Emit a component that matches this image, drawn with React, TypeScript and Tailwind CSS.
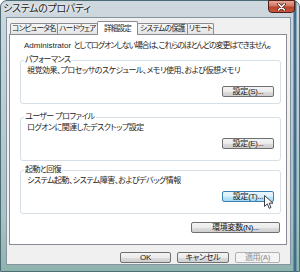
import React from 'react';

const btnBase =
  'h-[11px] flex items-center justify-center rounded-[2px] border text-[8px] leading-none whitespace-nowrap tracking-[-0.3px]';
const btnNormal =
  'border-[#707070] text-[#1a1a1a] bg-[linear-gradient(#f3f3f3_0%,#ebebeb_50%,#dddddd_51%,#cfcfcf_100%)]';
const btnHover =
  'border-[#3c7fb1] text-[#1a1a1a] bg-[linear-gradient(#eaf6fd_0%,#d9f0fc_50%,#bee6fd_51%,#a7d9f5_100%)]';
const btnDisabled = 'border-[#adb2b5] text-[#8d8d8d] bg-[#f4f4f4]';

const tabs = [
  { name: 'コンピュータ名', w: 'w-[48px]' },
  { name: 'ハードウェア', w: 'w-[41px] -ml-[1px]' },
  { name: '詳細設定', w: 'w-[41px] -ml-[1px]', active: true },
  { name: 'システムの保護', w: 'w-[51px] -ml-[1px]' },
  { name: 'リモート', w: 'w-[27px] -ml-[1px]' },
];

type GroupProps = {
  label: string;
  text: string;
  button: string;
  className: string;
  btnGap: string;
  hover?: boolean;
};

function Group({ label, text, button, className, btnGap, hover }: GroupProps) {
  return (
    <div
      className={`relative h-[44px] border border-[#d5dfe5] rounded-[3px] pt-[5px] pl-[6px] pr-[6px] flex flex-col ${className}`}
    >
      {/* legend sits over the top border */}
      <span className="absolute -top-[6px] left-[3px] bg-white px-[1px] text-[8px] leading-[10px] tracking-[-0.6px] whitespace-nowrap">
        {label}
      </span>
      <p className="text-[8px] leading-[10px] tracking-[-0.5px] whitespace-nowrap">{text}</p>
      <div className={`flex justify-end ${btnGap}`}>
        <div className={`relative w-[52px] ${btnBase} ${hover ? btnHover : btnNormal}`}>
          {button}
          {hover && (
            <svg
              className="absolute left-[41px] top-[3px] z-10"
              width="10"
              height="15"
              viewBox="0 0 10 15"
            >
              <path
                d="M0.5 0.5 L0.5 11.5 L3.3 8.9 L5.2 13.3 L7 12.5 L5.2 8.2 L9 8.2 Z"
                fill="#ffffff"
                stroke="#3a3f45"
                strokeWidth="1"
                strokeLinejoin="round"
              />
            </svg>
          )}
        </div>
      </div>
    </div>
  );
}

export default function App() {
  return (
    <div className="w-[300px] h-[272px] bg-white font-['Liberation_Sans','Noto_Sans_CJK_JP',sans-serif] [font-feature-settings:'palt'] text-[#1e1e1e] select-none">
      <div className="flex flex-col h-full rounded-t-[7px] border border-[#4a6c74] pl-[5px] pr-[8px] pb-[6px] bg-[linear-gradient(90deg,transparent_0%,transparent_98%,#3f6f8e_98.3%,#3f6f8e_99%,transparent_99.3%),linear-gradient(#cfd8de_0%,#bccbd2_40%,#a9c2c3_80%,#8fb3ad_100%)]">
        {/* Title bar */}
        <div className="h-[16px] flex items-start">
          <span className="-ml-[3px] mt-[1px] text-[10px] leading-[14px] tracking-[-0.3px] text-[#1a1a1a] whitespace-nowrap [text-shadow:0_0_4px_#ffffff,0_0_2px_#ffffff]">
            システムのプロパティ
          </span>
          <div className="ml-auto -mr-[4px] -mt-[1px] w-[27px] h-[13px] rounded-b-[4px] border border-[#4e2019] bg-[linear-gradient(#e9a99a_0%,#d07560_45%,#b8432d_55%,#c9573c_100%)] flex items-center justify-center">
            <svg width="9" height="8" viewBox="0 0 9 8">
              <path d="M1.5 1 L7.5 7 M7.5 1 L1.5 7" stroke="#4a1c14" strokeWidth="3" strokeLinecap="round" />
              <path d="M1.5 1 L7.5 7 M7.5 1 L1.5 7" stroke="#ffffff" strokeWidth="1.6" strokeLinecap="round" />
            </svg>
          </div>
        </div>

        {/* Client area */}
        <div className="flex-1 flex flex-col bg-[#f0f0f0] border border-[#8595a0] px-[2px] pt-[3px]">
          {/* Tabs */}
          <div className="flex items-end h-[13px] pl-[1px]">
            {tabs.map((t) =>
              t.active ? (
                <div
                  key={t.name}
                  className={`${t.w} relative z-10 h-[14px] -mb-[1px] border border-b-0 border-[#898c95] bg-white rounded-t-[2px] flex items-center justify-center text-[7.5px] leading-none tracking-[-0.7px] whitespace-nowrap`}
                >
                  {t.name}
                </div>
              ) : (
                <div
                  key={t.name}
                  className={`${t.w} h-[11px] border border-b-0 border-[#898c95] rounded-t-[2px] bg-[linear-gradient(#f6f6f6,#e4e4e4)] flex items-center justify-center overflow-hidden text-[7.5px] leading-none tracking-[-0.7px] whitespace-nowrap`}
                >
                  {t.name}
                </div>
              )
            )}
          </div>

          {/* Tab panel */}
          <div className="w-[278px] h-[211px] border border-[#898c95] bg-white pt-[6px] pl-[10px] pr-[5px] flex flex-col">
            <p className="pl-[4px] text-[8px] leading-[10px] whitespace-nowrap">
              Administrator <span className="tracking-[-1.1px]">としてログオンしない場合は、これらのほとんどの変更はできません。</span>
            </p>
            <Group
              className="mt-[9px]"
              label="パフォーマンス"
              text="視覚効果、プロセッサのスケジュール、メモリ使用、および仮想メモリ"
              button="設定(S)..."
              btnGap="mt-[10px]"
            />
            <Group
              className="mt-[13px]"
              label="ユーザー プロファイル"
              text="ログオンに関連したデスクトップ設定"
              button="設定(E)..."
              btnGap="mt-[5px]"
            />
            <Group
              className="mt-[9px]"
              label="起動と回復"
              text="システム起動、システム障害、およびデバッグ情報"
              button="設定(T)..."
              btnGap="mt-[5px]"
              hover
            />
            <div className="flex justify-end mt-[8px] pr-[1px]">
              <div className={`w-[89px] ${btnBase} ${btnNormal}`}>環境変数(N)...</div>
            </div>
          </div>

          {/* Dialog buttons */}
          <div className="flex justify-end gap-[6px] mt-[7px] pr-[8px]">
            <div className={`w-[51px] ${btnBase} ${btnNormal}`}>OK</div>
            <div className={`w-[52px] ${btnBase} ${btnNormal}`}>キャンセル</div>
            <div className={`w-[45px] ${btnBase} ${btnDisabled}`}>適用(A)</div>
          </div>
        </div>
      </div>
    </div>
  );
}
